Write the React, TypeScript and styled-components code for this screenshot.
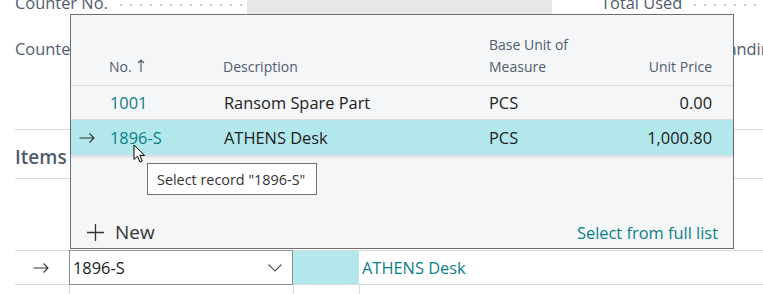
import React from "react";
import styled, { createGlobalStyle } from "styled-components";

const TEAL = "#0b7f86";
const MUTED = "#505c6d";
const TEXT = "#212121";
const SELECTED = "#b2e8ec";
const BODY_SIZE = "16.4px";

const GlobalStyle = createGlobalStyle`
    html, body {
        margin: 0;
        padding: 0;
        background: #fff;
    }
    body {
        font-family: "Open Sans", "Noto Sans", sans-serif;
        color: ${TEXT};
    }
`;

const Page = styled.div`
    position: relative;
    width: 763px;
    height: 294px;
    overflow: hidden;
    background: #fff;
    padding-left: 15px;
    box-sizing: border-box;
`;

const FieldRow = styled.div<{ $top: number }>`
    display: flex;
    align-items: center;
    height: 24px;
    margin-top: ${({ $top }) => $top}px;
`;

const FieldLabel = styled.span<{ $width: number }>`
    display: flex;
    align-items: center;
    gap: 8px;
    width: ${({ $width }) => $width}px;
    flex-shrink: 0;
    font-size: ${BODY_SIZE};
    color: ${MUTED};
    white-space: nowrap;
    overflow: hidden;
`;

const Leader = styled.span`
    flex: 1;
    height: 2px;
    margin-top: 6px;
    background-image: radial-gradient(circle, #c4c8cf 0.8px, transparent 1px);
    background-size: 10px 2px;
`;

const FieldValue = styled.span<{ $width: number }>`
    width: ${({ $width }) => $width}px;
    flex-shrink: 0;
    height: 100%;
    background: #e6e7e9;
`;

const Gap = styled.span<{ $width: number }>`
    width: ${({ $width }) => $width}px;
    flex-shrink: 0;
`;

const Divider = styled.div<{ $top: number }>`
    height: 1px;
    background: #d8dadd;
    margin-top: ${({ $top }) => $top}px;
`;

const SectionTitle = styled.div`
    margin-top: 15px;
    height: 24px;
    font-size: 19px;
    font-weight: 600;
    color: ${MUTED};
    line-height: 24px;
`;

const LinesTable = styled.div`
    margin-top: 71px;
    border-top: 1px solid #d8dadd;
`;

const LineRow = styled.div<{ $height: number }>`
    display: grid;
    grid-template-columns: 54px 224px 66px 1fr;
    height: ${({ $height }) => $height}px;
    border-bottom: 1px solid #d8dadd;
`;

const LineCell = styled.div<{ $fill?: boolean; $teal?: boolean; $divider?: boolean }>`
    display: flex;
    align-items: center;
    font-size: ${BODY_SIZE};
    padding-left: 3px;
    color: ${({ $teal }) => ($teal ? TEAL : TEXT)};
    background: ${({ $fill }) => ($fill ? SELECTED : "transparent")};
    border-left: ${({ $divider }) => ($divider ? "1px solid #d8dadd" : "none")};
`;

const ArrowCell = styled.div`
    display: flex;
    align-items: center;
    justify-content: center;
    padding-right: 2px;
`;

const LookupInput = styled.div`
    display: flex;
    align-items: center;
    justify-content: space-between;
    border: 1px solid #8a8f96;
    margin: -1px 0 -1px 0;
    padding: 0 10px 0 3px;
    font-size: ${BODY_SIZE};
    color: ${TEXT};
    background: #fff;
`;

const Popup = styled.div`
    position: absolute;
    left: 70px;
    top: 14px;
    width: 664px;
    height: 235px;
    box-sizing: border-box;
    border: 1px solid #6e6e6e;
    background: #f5f6f8;
    display: flex;
    flex-direction: column;
    z-index: 2;
`;

const ListGrid = styled.div`
    display: grid;
    grid-template-columns: 38px 114px 266px 1fr 120px;
    padding-right: 21px;
`;

const HeaderRow = styled(ListGrid)`
    height: 71px;
    align-items: end;
    border-bottom: 1px solid #dcdde0;
    font-size: 14px;
    color: ${MUTED};
    line-height: 22px;
    padding-bottom: 7px;
    box-sizing: border-box;
`;

const HeadCell = styled.div<{ $right?: boolean }>`
    display: flex;
    align-items: center;
    justify-content: ${({ $right }) => ($right ? "flex-end" : "flex-start")};
    text-align: ${({ $right }) => ($right ? "right" : "left")};
`;

const DataRow = styled(ListGrid)<{ $selected?: boolean }>`
    height: ${({ $selected }) => ($selected ? 35 : 34)}px;
    align-items: center;
    font-size: ${BODY_SIZE};
    color: ${TEXT};
    background: ${({ $selected }) => ($selected ? SELECTED : "transparent")};
    border-bottom: ${({ $selected }) => ($selected ? "none" : "1px solid #dcdde0")};
    box-shadow: ${({ $selected }) => ($selected ? "0 2px 3px rgba(0,0,0,0.12)" : "none")};
    box-sizing: border-box;
`;

const Cell = styled.div<{ $teal?: boolean; $right?: boolean; $shift?: number }>`
    color: ${({ $teal }) => ($teal ? TEAL : TEXT)};
    text-align: ${({ $right }) => ($right ? "right" : "left")};
    padding-left: ${({ $shift }) => $shift ?? 0}px;
    white-space: nowrap;
`;

const RowMarker = styled.div`
    display: flex;
    align-items: center;
    padding-left: 8px;
`;

const Footer = styled.div`
    margin-top: auto;
    display: flex;
    align-items: center;
    justify-content: space-between;
    padding: 0 15px 1px 16px;
    height: 30px;
`;

const NewAction = styled.div`
    display: flex;
    align-items: center;
    gap: 11px;
    font-size: 19px;
    color: #333;
`;

const FullListLink = styled.div`
    font-size: ${BODY_SIZE};
    color: ${TEAL};
`;

const Tooltip = styled.div`
    position: absolute;
    left: 147px;
    top: 163px;
    width: 170px;
    height: 32px;
    box-sizing: border-box;
    border: 1px solid #707070;
    background: #fff;
    font-size: 14.4px;
    color: #333;
    display: flex;
    align-items: center;
    padding-left: 9px;
    white-space: nowrap;
    z-index: 3;
`;

const Cursor = styled.svg`
    position: absolute;
    left: 133px;
    top: 144px;
    z-index: 4;
`;

const RightArrow = ({ color = "#333" }: { color?: string }) => (
    <svg width="16" height="10" viewBox="0 0 16 10" fill="none">
        <path d="M0.5 5H15M10.5 0.5L15 5L10.5 9.5" stroke={color} strokeWidth="1.1" />
    </svg>
);

const SortArrow = () => (
    <svg width="8" height="13" viewBox="0 0 8 13" fill="none" style={{ marginLeft: 5, marginTop: -3 }}>
        <path d="M4 1V13M1 4L4 1L7 4" stroke={MUTED} strokeWidth="1.2" />
    </svg>
);

const Chevron = () => (
    <svg width="14" height="8" viewBox="0 0 14 8" fill="none">
        <path d="M0.5 0.5L7 7L13.5 0.5" stroke="#555" strokeWidth="1.1" />
    </svg>
);

const Plus = () => (
    <svg width="17" height="17" viewBox="0 0 17 17" fill="none">
        <path d="M8.5 0V17M0 8.5H17" stroke="#333" strokeWidth="1.3" />
    </svg>
);

const items = [
    { no: "1001", desc: "Ransom Spare Part", unit: "PCS", price: "0.00", selected: false },
    { no: "1896-S", desc: "ATHENS Desk", unit: "PCS", price: "1,000.80", selected: true },
];

export default function App() {
    return (
        <Page>
            <GlobalStyle />
            <FieldRow $top={-10}>
                <FieldLabel $width={232}>
                    Counter No.
                    <Leader />
                </FieldLabel>
                <FieldValue $width={305} />
                <Gap $width={49} />
                <FieldLabel $width={162}>
                    Total Used
                    <Leader />
                </FieldLabel>
            </FieldRow>
            <FieldRow $top={22}>
                <FieldLabel $width={596}>Counter No. Series</FieldLabel>
                <FieldLabel $width={200}>Counters Outstanding</FieldLabel>
            </FieldRow>
            <Divider $top={69} />
            <SectionTitle>Items</SectionTitle>
            <Divider $top={9} />
            <LinesTable>
                <LineRow $height={33}>
                    <ArrowCell>
                        <RightArrow />
                    </ArrowCell>
                    <LookupInput>
                        1896-S
                        <Chevron />
                    </LookupInput>
                    <LineCell $fill />
                    <LineCell $teal>ATHENS Desk</LineCell>
                </LineRow>
                <LineRow $height={20}>
                    <LineCell />
                    <LineCell $divider />
                    <LineCell $divider />
                    <LineCell $divider />
                </LineRow>
            </LinesTable>

            <Popup>
                <HeaderRow>
                    <div />
                    <HeadCell>
                        No.
                        <SortArrow />
                    </HeadCell>
                    <HeadCell>Description</HeadCell>
                    <HeadCell>
                        Base Unit of
                        <br />
                        Measure
                    </HeadCell>
                    <HeadCell $right>Unit Price</HeadCell>
                </HeaderRow>
                {items.map((item) => (
                    <DataRow key={item.no} $selected={item.selected}>
                        <RowMarker>{item.selected ? <RightArrow /> : null}</RowMarker>
                        <Cell $teal $shift={1}>
                            {item.no}
                        </Cell>
                        <Cell $shift={1}>{item.desc}</Cell>
                        <Cell>{item.unit}</Cell>
                        <Cell $right>{item.price}</Cell>
                    </DataRow>
                ))}
                <Footer>
                    <NewAction>
                        <Plus />
                        New
                    </NewAction>
                    <FullListLink>Select from full list</FullListLink>
                </Footer>
            </Popup>

            <Tooltip>Select record "1896-S"</Tooltip>

            <Cursor width="13" height="19" viewBox="0 0 13 19">
                <path
                    d="M1 1V15.5L4.5 12.2L7 18L9.3 17L6.9 11.4H11.6Z"
                    fill="#fff"
                    stroke="#000"
                    strokeWidth="1"
                    strokeLinejoin="round"
                />
            </Cursor>
        </Page>
    );
}
